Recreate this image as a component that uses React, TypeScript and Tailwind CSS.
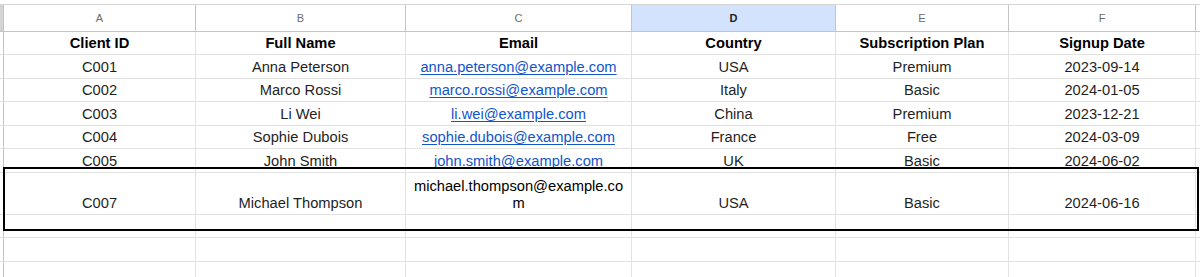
const cols = ["A", "B", "C", "D", "E", "F"];

type Row = { cells: string[]; h: string; bold?: boolean; email?: boolean };

const rows: Row[] = [
  { cells: ["Client ID", "Full Name", "Email", "Country", "Subscription Plan", "Signup Date"], h: "h-[23px]", bold: true },
  { cells: ["C001", "Anna Peterson", "anna.peterson@example.com", "USA", "Premium", "2023-09-14"], h: "h-[24px]", email: true },
  { cells: ["C002", "Marco Rossi", "marco.rossi@example.com", "Italy", "Basic", "2024-01-05"], h: "h-[23px]", email: true },
  { cells: ["C003", "Li Wei", "li.wei@example.com", "China", "Premium", "2023-12-21"], h: "h-[24px]", email: true },
  { cells: ["C004", "Sophie Dubois", "sophie.dubois@example.com", "France", "Free", "2024-03-09"], h: "h-[23px]", email: true },
  { cells: ["C005", "John Smith", "john.smith@example.com", "UK", "Basic", "2024-06-02"], h: "h-[24px]", email: true },
  { cells: ["C007", "Michael Thompson", "", "USA", "Basic", "2024-06-16"], h: "h-[42px]" },
  { cells: ["", "", "", "", "", ""], h: "h-[23px]" },
  { cells: ["", "", "", "", "", ""], h: "h-[24px]" },
  { cells: ["", "", "", "", "", ""], h: "h-[24px]" },
];

export default function App() {
  return (
    <div className="relative w-[1200px] h-[277px] overflow-hidden bg-white pt-[4px] font-['Liberation_Sans',Arial,sans-serif] text-[14.7px] leading-[17px] text-[#1f1f1f]">
      <div className="grid grid-cols-[4px_192px_210px_226px_204px_173px_187px_1fr] border-t border-[#d6d6d6]">
        {/* column letters */}
        <div className="h-[27px] bg-[#d4d4d4] border-r border-b border-[#c4c4c4]" />
        {cols.map((c) => (
          <div
            key={c}
            className={
              c === "D"
                ? "h-[27px] flex items-center justify-center bg-[#d3e3fd] border-r border-b border-[#c4c4c4] text-[11px] font-bold text-[#1f1f1f]"
                : "h-[27px] flex items-center justify-center border-r border-b border-[#c4c4c4] text-[11px] text-[#6b6b6b]"
            }
          >
            {c}
          </div>
        ))}
        <div className="h-[27px] border-b border-[#c4c4c4]" />

        {rows.map((r, ri) => (
          <div key={ri} className="contents">
            <div className={`${r.h} border-r border-b border-[#c4c4c4] border-b-[#e2e2e2]`} />
            {r.cells.map((v, ci) => (
              <div
                key={ci}
                className={`${r.h} flex items-end justify-center pb-[2px] px-[3px] text-center border-r border-b border-[#e2e2e2] ${r.bold ? "font-bold text-black" : ""}`}
              >
                {ri === 6 && ci === 2 ? (
                  <span className="text-black">
                    michael.thompson@example.co
                    <br />m
                  </span>
                ) : r.email && ci === 2 ? (
                  <span className="text-[#1155cc] underline underline-offset-[2px]">{v}</span>
                ) : (
                  <span className="whitespace-nowrap">{v}</span>
                )}
              </div>
            ))}
            <div className={`${r.h} border-b border-[#e2e2e2]`} />
          </div>
        ))}
      </div>

      {/* drawn rectangle over the new row */}
      <div className="absolute left-[3px] top-[167px] w-[1196px] h-[64px] border-2 border-black pointer-events-none" />
    </div>
  );
}
